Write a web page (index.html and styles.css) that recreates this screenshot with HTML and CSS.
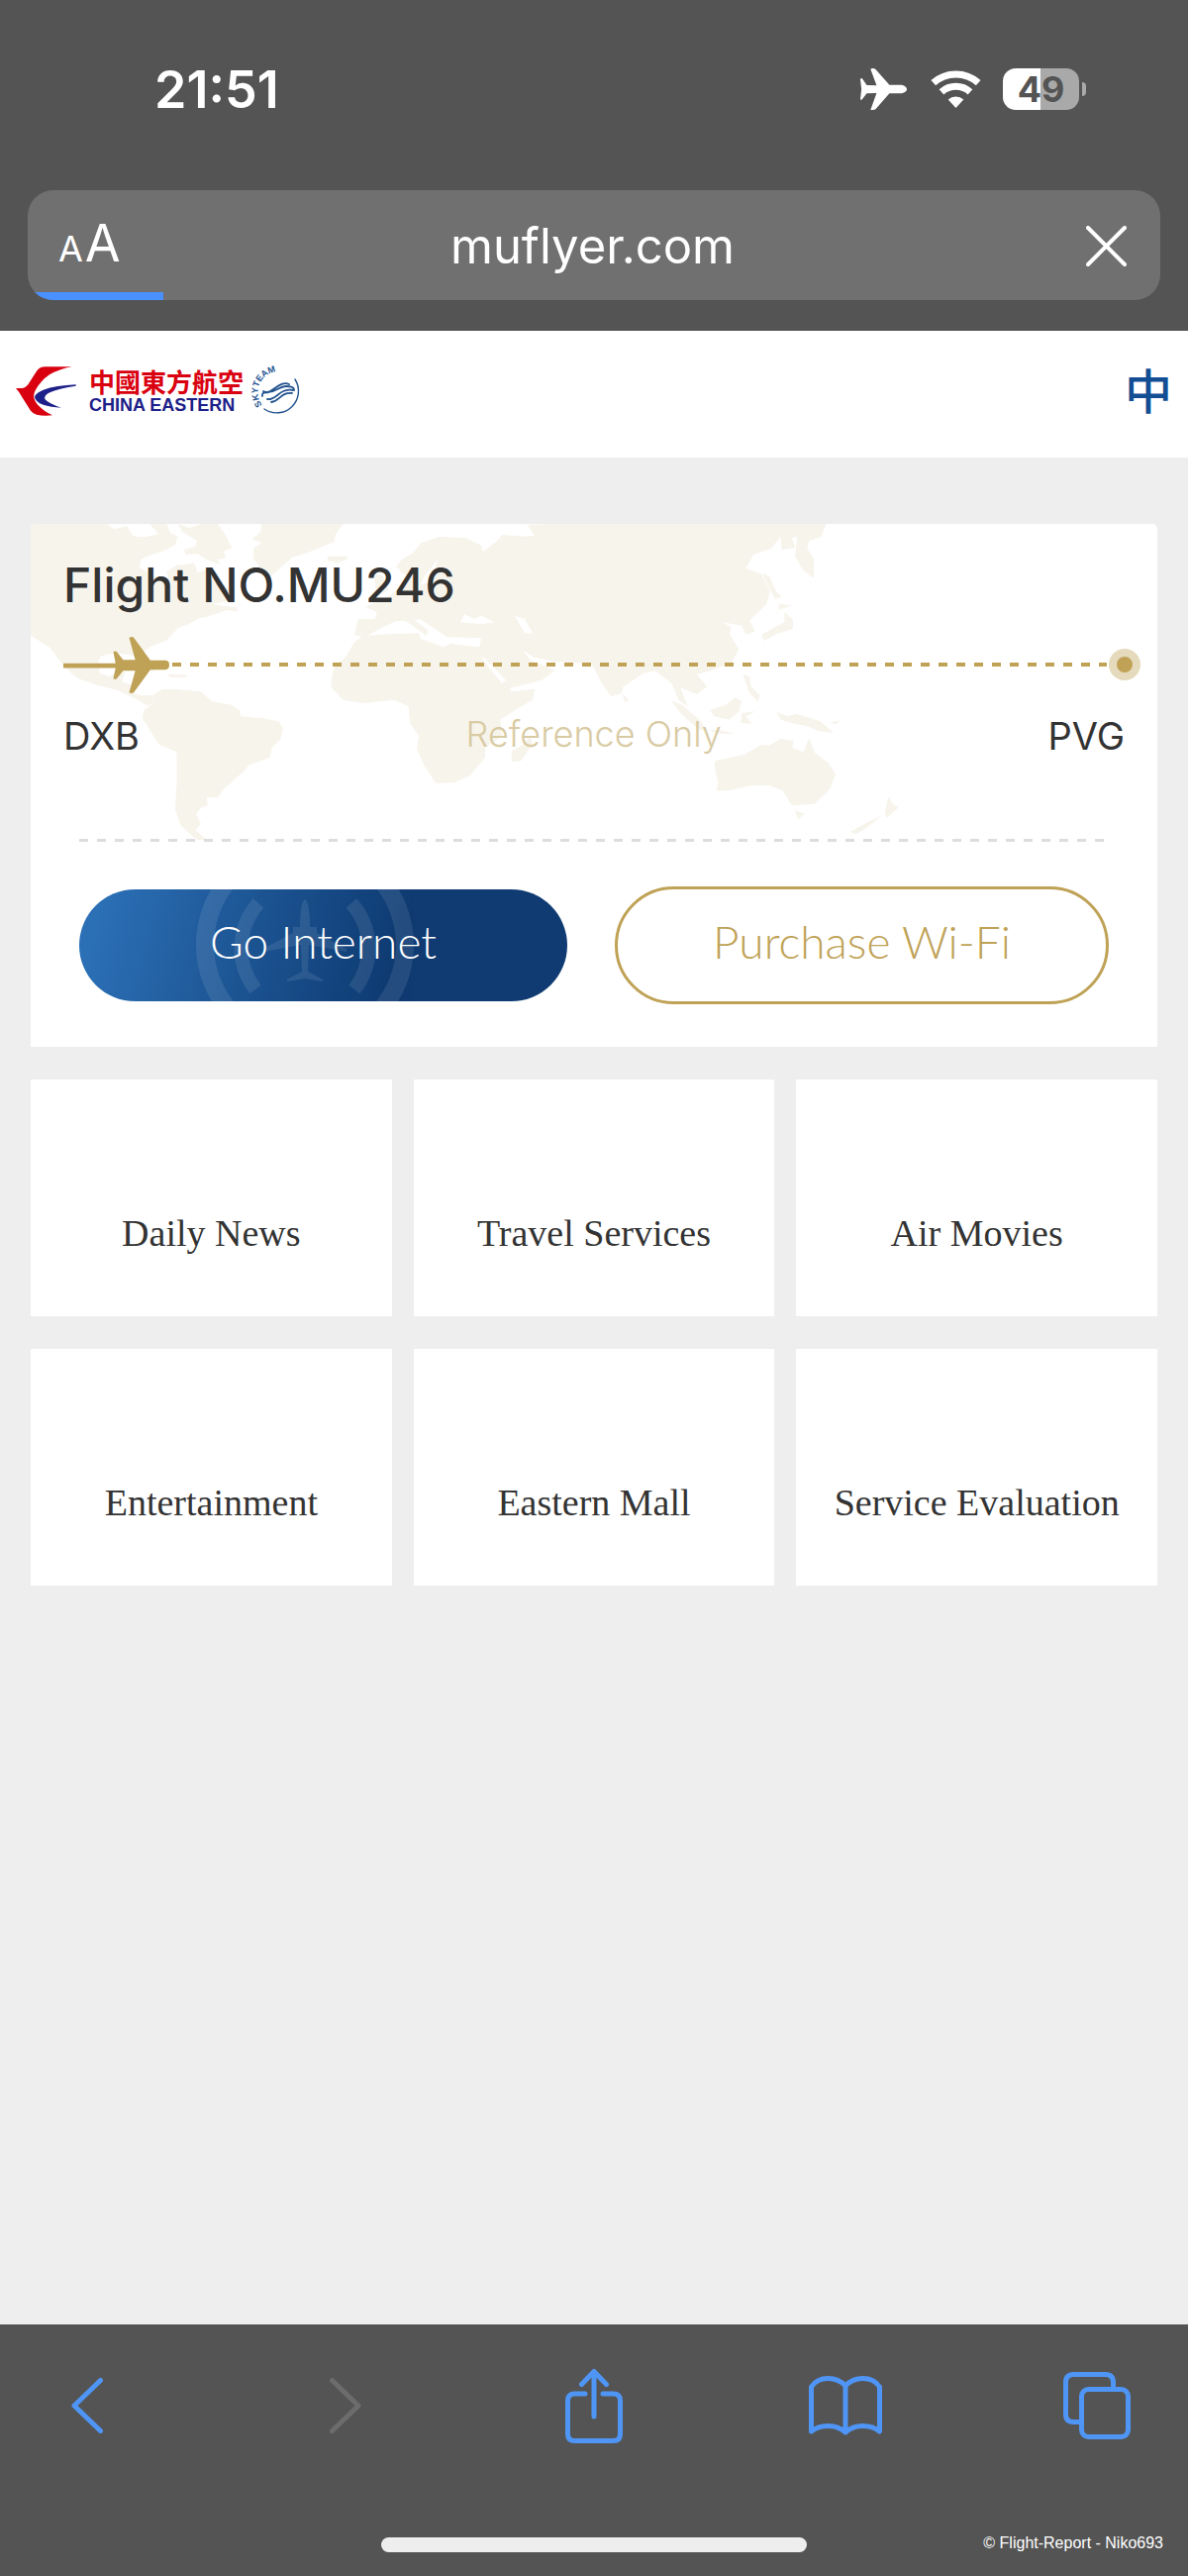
FILE: index.html
```html
<!doctype html>
<html lang="en">
<head>
  <meta charset="UTF-8" />
  <meta name="viewport" content="width=device-width,initial-scale=1" />
  <title>China Eastern Wi-Fi</title>
  <link rel="stylesheet" href="styles.css">
</head>
<body>
  <header class="browser-top">
    <div class="status">
      <div class="time">21:51</div>
      <div class="status-icons">
        <svg class="airplane" viewBox="703 207 123 126" preserveAspectRatio="none" aria-hidden="true">
          <path d="M826 270C826 277 818 283 808 283L780 283L744 330Q741 333 736 333H730L746 282L720 283L708 301Q705 304 703 301L706 270L703 240Q705 235 708 238L720 258L746 259L730 209Q733 207 736 207Q741 207 744 211L780 257L808 257C818 257 826 263 826 270Z"/>
        </svg>
        <svg class="wifi" viewBox="0 0 51 38" aria-hidden="true">
          <path class="arc" d="M2.8 12.7A34 34 0 0 1 48.2 12.7M11 21.9A21.7 21.7 0 0 1 40 21.9"/>
          <path d="M25.5 38L17.7 29.4A11.6 11.6 0 0 1 33.3 29.4Z"/>
        </svg>
        <div class="battery">49</div>
        <div class="battery-tip"></div>
      </div>
    </div>
    <div class="address">
      <button class="reader" aria-label="Page settings"><small>A</small>A</button>
      <input type="text" value="muflyer.com" aria-label="Address">
      <button class="stop" aria-label="Stop loading">
        <svg viewBox="0 0 41 41"><path d="M2 2L39 39M39 2L2 39"/></svg>
      </button>
      <div class="progress"></div>
    </div>
  </header>

  <nav class="site-bar">
    <a class="logo" href="#">
      <svg class="bird" viewBox="49 123 183 150" preserveAspectRatio="none" aria-hidden="true">
        <path fill="#d9000f" d="M49 189H66Q78 189 86 178L112 137Q121 124 138 124H219Q180 131 151 148Q124 166 108 196Q96 218 116 240Q135 260 160 271Q132 274 112 269Q101 266 94 257L66 213Q60 201 49 189Z"/>
        <path fill="#1d2088" d="M231 178Q170 181 132 194Q108 204 106 215Q108 230 132 239Q154 246 187 248Q149 236 137 222Q133 211 152 202Q182 188 231 182Z"/>
      </svg>
      <span class="logo-text">
        <span class="logo-cn" lang="zh-Hant">中國東方航空</span>
        <span class="logo-en">CHINA EASTERN</span>
      </span>
      <svg class="skyteam" viewBox="0 0 52 52" aria-hidden="true">
        <path id="ring" fill="none" d="M11 40A21 21 0 0 1 44 14"/>
        <text><textPath href="#ring">SKYTEAM</textPath></text>
        <path class="swoosh" stroke-width="1.4" d="M44 14A22 22 0 0 1 13 44"/>
        <path class="swoosh" stroke-width="1.8" d="M12 26C19 32 28 14 38 19M11 31Q10 27 16 27C26 27 27 21 35 21Q42 21 43 24M16 34C25 36 28 22 43 25M20 37C29 36 29 27 41 28"/>
      </svg>
    </a>
    <a class="lang" href="#" lang="zh">中</a>
  </nav>

  <main>
    <section class="card">
      <div class="flight">
        <!-- world map backdrop -->
        <svg class="map" viewBox="81 57 2973 960" preserveAspectRatio="none" aria-hidden="true">
          <g class="land">
            <path d="M81 57H285L300 73L335 64L350 94L380 97L418 88L395 57H440L450 85L470 95L462 120L430 140L400 150L372 165L368 190L400 210L425 235L445 230L440 200L470 180L490 180L512 175L522 205L555 190L590 240L622 275L595 292L560 300L590 305L625 310L628 322L600 318L555 335L520 345L500 360L470 372L440 410L395 430L372 450L382 490L370 490L352 455L300 448L265 458L258 480L264 510L290 520L310 502L330 505L322 535L350 545L352 570L375 577L402 576L405 598L390 608L360 588L310 560L250 543L205 525L170 490L130 430L81 395Z"/>
            <path d="M470 57L500 70L530 57H575L595 90L612 130L590 140L596 160L575 165L580 180L545 165L520 148L490 150L485 135L515 125L520 108L480 80Z"/>
            <path d="M690 57H905L885 90L882 112L820 140L770 160L740 190L715 215L690 195L668 160L670 130L690 115L666 103L688 80Z"/>
            <path d="M862 155L915 155L918 165L890 174L868 170ZM350 480L400 492L410 505L370 492ZM440 512L490 514L495 521L450 522Z"/>
            <path d="M402 576L430 557L465 558L530 565L560 595L610 605L632 622L635 640L690 645L735 655L747 675L740 710L718 735L712 765L655 788L645 805L590 860L575 885L545 885L548 910L530 917L518 935L530 965L515 985L548 1015L520 1014L490 985L475 965L462 920L466 850L466 748L420 725L395 680L375 645L380 620L405 600Z"/>
            <path d="M1090 145L1110 115L1160 95L1230 100L1270 122L1275 140L1310 110L1325 90L1385 95L1410 92L1392 60L1440 57H2180L2168 95L2135 108L2130 130L2148 165L2147 222L2118 195L2098 155L2103 95L2090 100L2098 130L2063 135L2060 95L2035 132L1988 150L1968 192L2008 208L2033 260L2023 300L1978 350L1993 382L1968 392L1958 365L1905 355L1930 370L1925 390L1950 437L1930 478L1868 505L1838 512L1866 550L1838 573L1795 552L1815 610L1790 590L1773 540L1728 502L1698 510L1645 550L1640 570L1613 580L1588 540L1573 505L1560 480L1470 475L1410 462L1380 440L1400 470L1465 500L1430 530L1345 555L1350 565L1412 557L1405 590L1360 620L1320 650L1325 700L1280 735L1280 765L1240 820L1200 840L1150 843L1120 790L1100 740L1105 700L1082 660L1078 610L1040 590L960 600L905 590L873 550L880 495L915 455L935 415L955 398L935 393L945 345L990 345L995 325L965 308L1000 290L1035 270L1060 240L1090 215L1065 210L1045 185L1060 165Z"/>
            <path d="M985 205L1010 215L1025 255L1000 275L975 280L992 255ZM1400 700L1405 725L1375 775L1350 777L1350 745L1375 730ZM1643 572L1660 590L1648 598Z"/>
            <path d="M2010 205L2030 215L2050 265L2062 278L2045 284ZM2055 300L2090 303L2055 318ZM2070 325L2092 345L2092 375L2050 390L2015 412L2010 392L2045 370L2070 355Z"/>
            <path d="M1770 592L1800 605L1850 655L1865 685L1845 680L1800 635ZM1865 680L1900 682L1940 692L1900 692ZM1873 620L1915 605L1940 582L1957 595L1950 625L1925 650L1885 640ZM1958 630L1995 624L1968 640L1985 662L1955 660ZM1960 512L1978 520L1982 550L2005 575L2000 595L1978 570ZM2050 627L2080 640L2100 632L2165 655L2200 690L2160 685L2130 670L2090 660L2060 650ZM2190 660L2215 652L2208 664Z"/>
            <path d="M1888 775L1965 755L2010 725L2030 728L2060 708L2095 715L2090 735L2120 748L2135 705L2150 750L2185 780L2205 815L2190 860L2150 905L2090 910L2065 865L2030 848L1980 850L1920 865L1890 865L1895 840L1885 790ZM2098 925L2125 935L2105 952ZM2345 883L2355 905L2372 915L2340 948L2335 930ZM2328 940L2290 975L2260 997L2243 990L2290 960Z"/>
          </g>
          <!-- inland seas -->
          <path class="sea" d="M970 395L1010 370L1045 352L1070 350L1125 395L1130 380L1095 348L1110 346L1160 385L1180 400L1270 402L1265 430L1190 420L1170 430L1110 405L1105 388L1040 390Z"/>
          <path class="sea" d="M1215 355L1225 330L1250 345L1270 335L1305 355L1270 360ZM1358 335L1385 345L1405 388L1385 388ZM1268 460L1280 465L1335 530L1325 540ZM1120 215L1155 165L1150 185L1135 215L1150 230L1110 240Z"/>
        </svg>
        <h1>Flight NO.MU246</h1>
        <div class="route">
          <svg class="plane" viewBox="167 400 280 170" preserveAspectRatio="none" aria-hidden="true">
            <path d="M167 480H305L299 445Q304 442 308 445L325 469H357L341 403Q347 398 353 402L397 471H437Q447 472 447 485Q447 498 437 499H397L353 568Q347 572 341 568L357 502H325L308 526Q304 529 299 526L305 494H167Z"/>
          </svg>
          <div class="track"></div>
          <div class="dot"></div>
        </div>
        <div class="airports">
          <span>DXB</span>
          <span class="note">Reference Only</span>
          <span>PVG</span>
        </div>
      </div>
      <div class="actions">
        <button class="btn go">
          <svg viewBox="-120 -56 240 113" aria-hidden="true">
            <circle r="101" fill="none" stroke="#fff" stroke-width="18"/>
            <path fill="none" stroke="#fff" stroke-width="14" d="M-47 -42A68 68 0 0 0 -50 45M47 -42A68 68 0 0 1 50 45"/>
            <path fill="#fff" d="M0 -46Q5 -42 5 -18L12 -18V-12L42 4V7L4 0L3 27L18 35V37L0 34L-18 37V35L-3 27L-4 0L-42 7V4L-12 -12V-18L-5 -18Q-5 -42 0 -46Z"/>
          </svg>
          <span>Go Internet</span>
        </button>
        <button class="btn buy">Purchase Wi-Fi</button>
      </div>
    </section>

    <section class="tiles">
      <a href="#">Daily News</a>
      <a href="#">Travel Services</a>
      <a href="#">Air Movies</a>
      <a href="#">Entertainment</a>
      <a href="#">Eastern Mall</a>
      <a href="#">Service Evaluation</a>
    </section>
  </main>

  <footer class="browser-bottom">
    <div class="toolbar">
      <button aria-label="Back"><svg width="32" height="56" viewBox="0 0 32 56"><path d="M29.5 2.5L3 28L29.5 53.5"/></svg></button>
      <button class="off" aria-label="Forward" disabled><svg width="32" height="56" viewBox="0 0 32 56"><path d="M2.5 2.5L29 28L2.5 53.5"/></svg></button>
      <button aria-label="Share"><svg width="58" height="76" viewBox="0 0 58 76"><path d="M20 26H9.5Q2.5 26 2.5 33V66.5Q2.5 73.5 9.5 73.5H48.5Q55.5 73.5 55.5 66.5V33Q55.5 26 48.5 26H38M29 49V4M16.5 16.5L29 3.5L41.5 16.5"/></svg></button>
      <button aria-label="Bookmarks"><svg width="74" height="60" viewBox="0 0 74 60"><path d="M37 10Q30 2.5 19.5 2.5Q8 2.5 2.5 11V56Q9 50.5 19.5 50.5Q30 50.5 37 57Q44 50.5 54.5 50.5Q65 50.5 71.5 56V11Q66 2.5 54.5 2.5Q44 2.5 37 10V57"/></svg></button>
      <button aria-label="Tabs"><svg width="68" height="68" viewBox="0 0 68 68"><rect x="18.5" y="17.5" width="47" height="48" rx="7"/><path d="M18 50.5H10.5Q2.5 50.5 2.5 42.5V10.5Q2.5 2.5 10.5 2.5H42.5Q50.5 2.5 50.5 10.5V17"/></svg></button>
    </div>
    <div class="home-bar"></div>
    <div class="credit">© Flight-Report - Niko693</div>
  </footer>
</body>
</html>
```
FILE: styles.css
```css
:root { --gold:#bfa256; --chrome:#545454; --blue:#4f95f5; --ink:#333; }
*{ box-sizing:border-box; }
body{
  margin:0; min-height:100vh;
  display:flex; flex-direction:column;
  background:#eee;
  color: var(--ink);
  font-family: Inter, "Liberation Sans", sans-serif;
}
button{
  border:0; padding:0;
  background:none;
  color:inherit;
  font-family:inherit;
  cursor:pointer;
}
a{ color:inherit; text-decoration:none; }
svg{ display:block; }

/* browser top */
.browser-top{
  background: var(--chrome);
  color:#fff;
  padding: 61px 28px 31px;
}
.status{
  display:flex;
  justify-content:space-between;
  align-items:center;
  height: 58px;
  padding: 0 75px 0 128px;
  margin-bottom: 73px;
}
.time{ font-size: 52px; font-weight: 600; }
.status-icons{ display:flex; align-items:center; }
.status-icons svg{ fill:#fff; }
.airplane{ width:47px; height:42px; margin-right:24px; }
.wifi{ width:51px; height:38px; margin-right:22px; }
.wifi .arc{ fill:none; stroke:#fff; stroke-width:7; }
.battery{
  width:77px; height:42px;
  border-radius: 13px;
  background: linear-gradient(90deg, #fff 50%, #a9a9a9 50%);
  color: var(--chrome);
  font-size: 36px;
  font-weight: 700;
  line-height: 42px;
  text-align:center;
}
.battery-tip{
  width:4px; height:14px;
  margin-left: 3px;
  border-radius: 0 4px 4px 0;
  background:#a9a9a9;
}
.address{
  position:relative;
  display:flex;
  align-items:center;
  height: 111px;
  padding: 2px 34px 0 31px;
  border-radius: 26px;
  background:#707070;
  overflow:hidden;
}
.address input{
  flex:1; min-width:0;
  border:0; padding:0;
  background:none;
  color:#fff;
  font-family:inherit;
  font-size: 49px;
  text-align:center;
}
.reader{
  display:flex;
  align-items:baseline;
  gap: 2px;
  width: 60px;
  font-size: 52px;
  line-height: 64px;
}
.reader small{ font-size: 36px; }
.stop{ width: 60px; }
.stop svg{
  width:41px; height:41px;
  margin-left:auto;
  stroke:#fff; stroke-width:4; stroke-linecap:round;
}
.progress{
  position:absolute; left:0; bottom:0;
  width:12%; height:8px;
  background:#4a90ff;
}

/* site bar */
.site-bar{
  display:flex;
  justify-content:space-between;
  align-items:center;
  height: 128px;
  padding: 0 16px 6px;
  background:#fff;
}
.logo{ display:flex; align-items:center; }
.bird{ width:61px; height:50px; margin-right:13px; }
.logo-text{ display:flex; flex-direction:column; }
.logo-cn{
  color:#d9000f;
  font-family:"Noto Sans CJK TC", sans-serif;
  font-size: 26px;
  font-weight: 700;
  line-height: 28px;
}
.logo-en{
  color:#1d2088;
  font-family:"Liberation Sans", sans-serif;
  font-size: 18px;
  font-weight: 700;
  line-height: 20px;
  white-space:nowrap;
}
.skyteam{ width:52px; height:52px; margin-left:8px; overflow:visible; }
.skyteam text{ font: 700 9px "Liberation Sans", sans-serif; fill:#23538f; }
.swoosh{ fill:none; stroke:#23538f; stroke-linecap:round; }
.lang{
  padding-bottom: 6px;
  color:#134e94;
  font-family:"Noto Sans CJK SC", sans-serif;
  font-size: 48px;
  font-weight: 500;
  line-height: 60px;
}

/* flight card */
main{ flex:1; padding: 67px 31px; }
.card{
  background:#fff;
  border-radius: 5px 5px 0 0;
  overflow:hidden;
}
.flight{
  position:relative;
  height: 320px;
  padding: 32px 33px 0;
}
.map{
  position:absolute; inset:0;
  width:100%; height:100%;
}
.land{ fill:#f7f4ec; }
.sea{ fill:#fff; }
.flight h1{
  position:relative;
  margin:0;
  font-size: 48px;
  font-weight: 500;
  line-height: 60px;
}
.route{
  position:relative;
  display:flex;
  align-items:center;
  height: 58px;
  margin: 21px -16px 0 0;
}
.plane{ width:107px; height:57px; fill:var(--gold); }
.track{
  flex:1; height:4px;
  margin: 0 2px 0 3px;
  background: repeating-linear-gradient(90deg, var(--gold) 0 9px, transparent 9px 18px);
}
.dot{
  width:32px; height:32px;
  border: 8px solid #e5dabb;
  border-radius:50%;
  background: var(--gold);
}
.airports{
  position:relative;
  display:flex;
  justify-content:space-between;
  align-items:center;
  height: 48px;
  margin-top: 19px;
  font-size: 38px;
}
.note{ color:#d9cba4; font-size:36px; font-weight:300; line-height:44px; padding-bottom:4px; }
.actions{
  display:grid;
  grid-template-columns: 493fr 499fr;
  align-items:center;
  gap: 48px;
  margin: 0 49px;
  padding: 46px 0 43px;
  position:relative;
}
.actions::before{
  content:"";
  position:absolute; left:0; right:0; top:-2px;
  height:3px;
  background: repeating-linear-gradient(90deg, #ddd 0 9px, transparent 9px 18px);
}
.btn{
  height: 119px;
  padding-bottom: 8px;
  border-radius: 60px;
  font-family: Lato, "Open Sans", sans-serif;
  font-size: 46px;
  font-weight: 300;
}
.go{
  position:relative;
  height: 113px;
  color:#fff;
  background: linear-gradient(105deg, #2b6fb5 5%, #0f3b72 65%);
  overflow:hidden;
}
.go svg{
  position:absolute; left:22%; top:0;
  height:100%;
  opacity:.09;
}
.go span{ position:relative; }
.buy{ border:3px solid var(--gold); color:var(--gold); }

/* tiles */
.tiles{
  display:grid;
  grid-template-columns: repeat(3, 1fr);
  gap: 33px 22px;
  margin-top: 33px;
}
.tiles a{
  padding: 131px 8px 60px;
  background:#fff;
  font-family:"Liberation Serif", serif;
  font-size: 38px;
  line-height: 48px;
  text-align:center;
}

/* browser bottom */
.browser-bottom{
  position:relative;
  background: var(--chrome);
  padding: 40px 48px 24px;
}
.toolbar{
  display:grid;
  grid-template-columns: 261fr 251fr 254fr 254fr 84px;
  align-items:center;
  height: 83px;
}
.toolbar button{
  width:80px; height:83px;
  display:grid; place-items:center;
}
.toolbar svg{
  fill:none;
  stroke: var(--blue);
  stroke-width:5; stroke-linecap:round; stroke-linejoin:round;
}
.toolbar .off svg{ stroke:#6c6c6c; }
.home-bar{
  width: 39%; height:15px;
  margin: 92px auto 0;
  border-radius: 8px;
  background:#eee;
}
.credit{
  position:absolute; right:25px; bottom:23px;
  color:#fff;
  font-family:"Liberation Sans", sans-serif;
  font-size: 16px;
  line-height: 20px;
}
```
